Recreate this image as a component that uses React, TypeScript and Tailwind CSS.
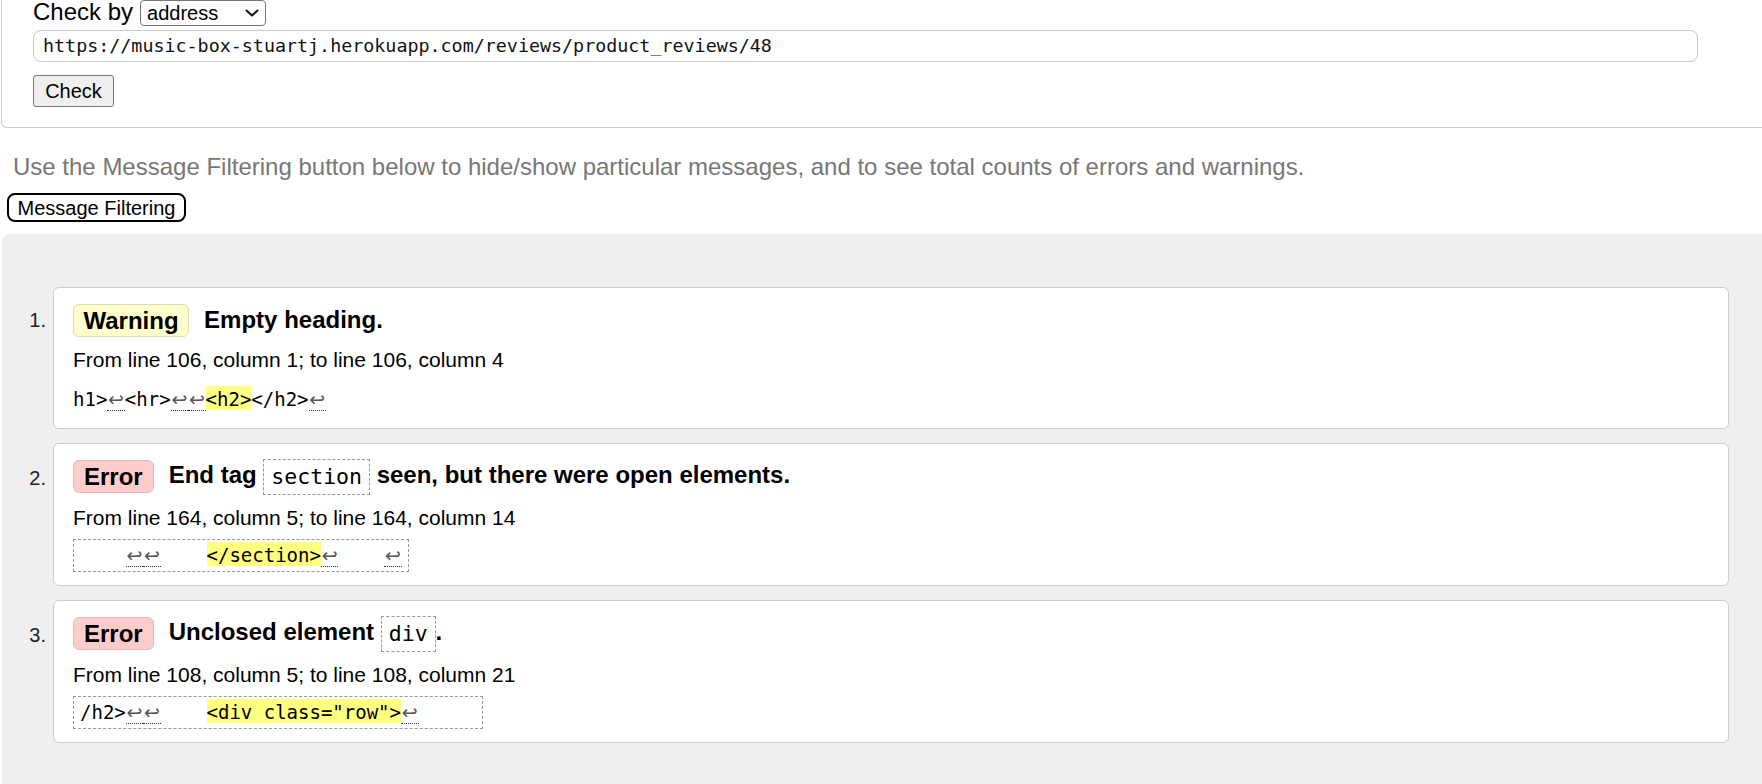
import React from "react";

const Arrow = () => (
  <span className="inline-block w-[17.5px] text-center font-['DejaVu_Sans',sans-serif] text-[19px] leading-[22px] text-[#555] border-b border-dotted border-[#333]">
    ↩
  </span>
);

const Hl = ({ children }: { children: React.ReactNode }) => (
  <span className="bg-[#ffff80] pt-[2px]">{children}</span>
);

const TitleCode = ({ children }: { children: React.ReactNode }) => (
  <span className="inline-block align-middle border border-dashed border-[#999] px-[7px] py-[5px] leading-[24px] font-normal font-['DejaVu_Sans_Mono',monospace] text-[21.5px]">
    {children}
  </span>
);

const Badge = ({ kind }: { kind: "warning" | "error" }) =>
  kind === "warning" ? (
    <span className="h-[33px] px-[9.5px] leading-[31px] rounded-[6px] border border-[#dcdcb4] bg-[#ffffcc] font-bold text-[24px]">
      Warning
    </span>
  ) : (
    <span className="h-[33px] px-[10px] leading-[31px] rounded-[6px] border border-[#e6b8b8] bg-[#ffcccc] font-bold text-[24px]">
      Error
    </span>
  );

export default function App() {
  return (
    <div className="w-[1762px] h-[784px] overflow-hidden bg-white text-black font-['Liberation_Sans',Arial,sans-serif]">
      {/* top form box */}
      <div className="ml-[1px] w-[1780px] border-l border-b border-[#cccccc] rounded-bl-[6px] pl-[31px] pb-[20px]">
        <div className="flex items-start h-[26px]">
          <span className="text-[24px] leading-[24px]">Check by</span>
          <div className="ml-[7px] w-[126px] h-[26px] border border-[#767676] rounded-[4px] bg-white flex items-center justify-between pl-[6px] pr-[6px]">
            <span className="text-[20px] leading-[24px]">address</span>
            <svg width="14" height="8" viewBox="0 0 14 8" fill="none">
              <path d="M1.5 1.5 L7 6.5 L12.5 1.5" stroke="#111" strokeWidth="2" strokeLinecap="round" strokeLinejoin="round" />
            </svg>
          </div>
        </div>
        <div className="mt-[4px] w-[1665px] h-[32px] border border-[#c8c8c8] rounded-[8px] pl-[9px] flex items-center font-['DejaVu_Sans_Mono',monospace] text-[18.35px] text-[#111]">
          https://music-box-stuartj.herokuapp.com/reviews/product_reviews/48
        </div>
        <div className="mt-[13px] w-[81px] h-[32px] bg-[#efefef] border border-[#767676] rounded-[3px] flex items-center justify-center text-[20px]">
          Check
        </div>
      </div>

      <p className="mt-[25px] ml-[13px] text-[24px] leading-[28px] text-[#777777]">
        Use the Message Filtering button below to hide/show particular messages, and to see total counts of errors and warnings.
      </p>

      <div className="mt-[12px] ml-[7px] w-[179px] h-[29px] border-2 border-black rounded-[8px] bg-white flex items-center justify-center text-[20px] leading-[24px]">
        Message Filtering
      </div>

      {/* results */}
      <div className="mt-[12px] ml-[2px] w-[1760px] h-[560px] bg-[#efefef] rounded-tl-[8px] pt-[53px] pr-[33px]">
        {/* 1 */}
        <div className="flex">
          <div className="w-[51px] shrink-0 text-right pr-[7px] mt-[21px] text-[20px] leading-[24px] text-[#222]">1.</div>
          <div className="flex-1 h-[142px] bg-white border border-[#cccccc] rounded-[6px] pl-[19px] pt-[14px]">
            <div className="flex items-center h-[36px]">
              <Badge kind="warning" />
              <span className="ml-[15px] font-bold text-[24px]">Empty heading.</span>
            </div>
            <div className="mt-[10px] text-[21px] leading-[24px]">From line 106, column 1; to line 106, column 4</div>
            <div className="mt-[15px] h-[24px] leading-[24px] whitespace-pre font-['DejaVu_Sans_Mono',monospace] text-[19px]">
              h1&gt;<Arrow />&lt;hr&gt;<Arrow /><Arrow /><Hl>&lt;h2&gt;</Hl>&lt;/h2&gt;<Arrow />
            </div>
          </div>
        </div>

        {/* 2 */}
        <div className="flex mt-[14px]">
          <div className="w-[51px] shrink-0 text-right pr-[7px] mt-[23px] text-[20px] leading-[24px] text-[#222]">2.</div>
          <div className="flex-1 h-[143px] bg-white border border-[#cccccc] rounded-[6px] pl-[19px] pt-[14px]">
            <div className="flex items-center h-[36px]">
              <Badge kind="error" />
              <span className="ml-[15px] font-bold text-[24px] whitespace-pre">
                End tag <TitleCode>section</TitleCode> seen, but there were open elements.
              </span>
            </div>
            <div className="mt-[12px] text-[21px] leading-[24px]">From line 164, column 5; to line 164, column 14</div>
            <div className="mt-[9px]">
              <span className="inline-block border border-dashed border-[#999] px-[6px] py-[3px] leading-[25px] whitespace-pre font-['DejaVu_Sans_Mono',monospace] text-[19px]">
                {"    "}<Arrow /><Arrow />{"    "}<Hl>&lt;/section&gt;</Hl><Arrow />{"    "}<Arrow />
              </span>
            </div>
          </div>
        </div>

        {/* 3 */}
        <div className="flex mt-[14px]">
          <div className="w-[51px] shrink-0 text-right pr-[7px] mt-[23px] text-[20px] leading-[24px] text-[#222]">3.</div>
          <div className="flex-1 h-[143px] bg-white border border-[#cccccc] rounded-[6px] pl-[19px] pt-[14px]">
            <div className="flex items-center h-[36px]">
              <Badge kind="error" />
              <span className="ml-[15px] font-bold text-[24px] whitespace-pre">
                Unclosed element <TitleCode>div</TitleCode>.
              </span>
            </div>
            <div className="mt-[12px] text-[21px] leading-[24px]">From line 108, column 5; to line 108, column 21</div>
            <div className="mt-[9px]">
              <span className="inline-block border border-dashed border-[#999] px-[6px] py-[3px] leading-[25px] whitespace-pre font-['DejaVu_Sans_Mono',monospace] text-[19px]">
                /h2&gt;<Arrow /><Arrow />{"    "}<Hl>&lt;div class="row"&gt;</Hl><Arrow />{"     "}
              </span>
            </div>
          </div>
        </div>
      </div>
    </div>
  );
}
